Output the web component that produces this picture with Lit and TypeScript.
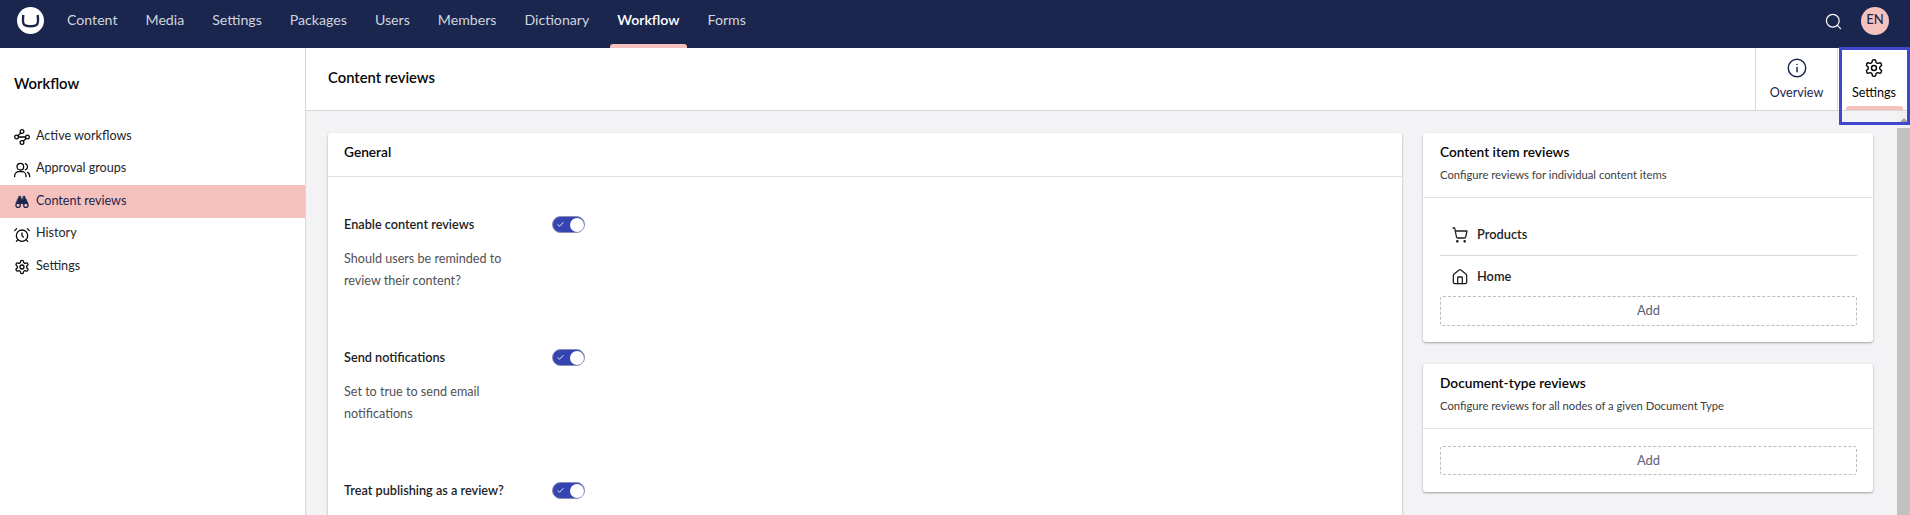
import { LitElement, html, css, svg } from "lit";
import { customElement, property } from "lit/decorators.js";

const ICONS: Record<string, unknown> = {
  workflow: svg`<circle cx="12" cy="3.800" r="2.800"/><path d="m10 5.800-3.500 4"/><circle cx="3.800" cy="12" r="2.800"/><path d="M6.600 12h10.800"/><circle cx="20.200" cy="12" r="2.800"/><path d="m14 18.200 4-4"/><circle cx="12" cy="20.200" r="2.800"/>`,
  users: svg`<path d="M18 22v-1.500a6 6 0 0 0-6-6H7a6 6 0 0 0-6 6V22"/><circle cx="9.500" cy="7" r="5"/><path d="M23.500 22v-1.500a6 6 0 0 0-3-5"/><path d="M17 2.300a5 5 0 0 1 0 9.400"/>`,
  alarm: svg`<circle cx="12" cy="13" r="8.500"/><path d="M12 9v4l2 2"/><path d="M4 2.500 1 5.500"/><path d="m23 5.500-3-3"/><path d="M5.800 19.200 3.500 21.500"/><path d="M18.200 19.200 20.500 21.500"/>`,
  settings: svg`<path d="M12.22 2h-.44a2 2 0 0 0-2 2v.18a2 2 0 0 1-1 1.73l-.43.25a2 2 0 0 1-2 0l-.15-.08a2 2 0 0 0-2.73.73l-.22.38a2 2 0 0 0 .73 2.73l.15.1a2 2 0 0 1 1 1.72v.51a2 2 0 0 1-1 1.74l-.15.09a2 2 0 0 0-.73 2.73l.22.38a2 2 0 0 0 2.73.73l.15-.08a2 2 0 0 1 2 0l.43.25a2 2 0 0 1 1 1.73V20a2 2 0 0 0 2 2h.44a2 2 0 0 0 2-2v-.18a2 2 0 0 1 1-1.73l.43-.25a2 2 0 0 1 2 0l.15.08a2 2 0 0 0 2.73-.73l.22-.39a2 2 0 0 0-.73-2.73l-.15-.08a2 2 0 0 1-1-1.74v-.5a2 2 0 0 1 1-1.74l.15-.09a2 2 0 0 0 .73-2.73l-.22-.38a2 2 0 0 0-2.73-.73l-.15.08a2 2 0 0 1-2 0l-.43-.25a2 2 0 0 1-1-1.73V4a2 2 0 0 0-2-2z"/><circle cx="12" cy="12" r="3"/>`,
  binoculars: svg`<g fill="currentColor" stroke-width="1"><path d="M7.500 3.500h2.500v2.500H7.500zM14 3.500h2.500v2.500H14z"/><path d="M6.500 6.500h4.500v8L3.500 13zM13 6.500h4.500L20.500 13l-7.500 1.500z"/><path d="M10 9h4v5h-4z"/></g><circle cx="6.200" cy="16.800" r="3.300"/><circle cx="17.800" cy="16.800" r="3.300"/>`,
  info: svg`<circle cx="12" cy="12" r="10.500"/><path d="M12 16.500v-5"/><path d="M12 7.700h.01"/>`,
  search: svg`<circle cx="11" cy="11" r="9"/><path d="m22 22-4.600-4.600"/>`,
  cart: svg`<circle cx="8" cy="21.500" r="1"/><circle cx="19" cy="21.500" r="1"/><path d="M1.500 1.500h2.500l2.700 13.500a2 2 0 0 0 2 1.500h9.800a2 2 0 0 0 2-1.500L22.500 6H5"/>`,
  home: svg`<path d="M2 9.500a2 2 0 0 1 .7-1.500l8-6.500a2 2 0 0 1 2.600 0l8 6.500a2 2 0 0 1 .7 1.500V20a2 2 0 0 1-2 2H4a2 2 0 0 1-2-2z"/><path d="M15.500 22v-9a1 1 0 0 0-1-1h-5a1 1 0 0 0-1 1v9"/>`,
  check: svg`<path d="M21 5 9 18l-6-5"/>`,
};

@customElement("ui-icon")
class UiIcon extends LitElement {
  @property() name = "";
  static styles = css`
    :host { display: block; width: 16px; height: 16px; flex: none; }
    svg { display: block; width: 100%; height: 100%; fill: none; stroke: currentColor; overflow: visible;
      stroke-width: var(--stroke, 1.9); stroke-linecap: round; stroke-linejoin: round; }
  `;
  render() {
    return html`<svg viewBox="0 0 24 24">${ICONS[this.name]}</svg>`;
  }
}

@customElement("ui-toggle")
class UiToggle extends LitElement {
  static styles = css`
    :host { display: flex; box-sizing: border-box; width: 33px; height: 17px; padding: 0 0 0 4px;
      border: 1px solid #8b8fb5; border-radius: 9px; background: #3544b1; color: #fff;
      align-items: center; justify-content: space-between; }
    .check { width: 7px; height: 7px; --stroke: 3; }
    .knob { width: 14px; height: 14px; border-radius: 50%; background: #fff; }
  `;
  render() {
    return html`<ui-icon class="check" name="check"></ui-icon><span class="knob"></span>`;
  }
}

@customElement("ui-box")
class UiBox extends LitElement {
  @property() headline = "";
  @property() description = "";
  static styles = css`
    :host { display: block; background: #fff; border-radius: 3px;
      box-shadow: 0 1px 3px rgba(0,0,0,.12), 0 1px 2px rgba(0,0,0,.24); }
    .head { box-sizing: border-box; height: 44px; padding: 10px 16px 0; border-bottom: 1px solid #e3e3e5; }
    .head.tall { height: 65px; padding-left: 17px; }
    .title { font-size: 13.700px; line-height: 18px; font-weight: 600; color: #060606; }
    .desc { font-size: 11.250px; line-height: 14px; margin-top: 7px; color: #3d3d40; }
  `;
  render() {
    return html`<div class="head ${this.description ? "tall" : ""}">
        <div class="title">${this.headline}</div>
        ${this.description ? html`<div class="desc">${this.description}</div>` : null}
      </div><slot></slot>`;
  }
}

@customElement("app-root")
class AppRoot extends LitElement {
  static styles = css`
    :host { display: flex; flex-direction: column; height: 515px; overflow: hidden; position: relative;
      font-family: Lato, "Liberation Sans", sans-serif; font-size: 14px; color: #060606; background: #f3f3f5; }
    .top { height: 48px; flex: none; display: flex; background: #1b264f; color: #d1d4dc; }
    .logo { width: 27px; height: 27px; margin: 7px 0 0 17px; flex: none; }
    .nav { display: flex; margin-left: 9px; flex: 1; font-size: 14.150px; }
    .tab { display: flex; flex-direction: column; justify-content: space-between; padding: 0 7px; }
    .tab span { padding: 11px 7px 0; line-height: 18px; }
    .tab.on { color: #fff; font-weight: 600; }
    .tab.on::after { content: ""; height: 4px; background: #f5c1bc; border-radius: 3px 3px 0 0; }
    .search { width: 17px; height: 17px; margin: 13px 19px 0 0; color: #fff; --stroke: 1.700; }
    .avatar { width: 28px; height: 28px; margin: 7px 21px 0 0; border-radius: 50%; background: #f5c1bc;
      color: #1b264f; font-size: 13px; font-weight: 500; line-height: 25px; text-align: center; }
    .body { flex: 1; display: flex; min-height: 0; }
    .side { box-sizing: border-box; width: 306px; flex: none; background: #fff; border-right: 1px solid #d8d7d9; }
    .side-title { box-sizing: border-box; padding: 26px 14px 0; line-height: 18px; font-size: 14.800px; font-weight: 600; height: 72px; }
    .menu { display: flex; flex-direction: column; }
    .item { display: flex; align-items: center; height: 32.500px; gap: 6px; padding-left: 14px; color: #262629; font-size: 12.600px; }
    .item ui-icon { margin-top: 2px; color: #060606; }
    .item span { line-height: 18px; margin-bottom: 1px; }
    .item.on { background: #f5c1bc; color: #1b264f; }
    .item.on ui-icon { color: #1b264f; }
    .main { flex: 1; display: flex; flex-direction: column; min-width: 0; }
    .head { height: 62px; flex: none; display: flex; background: #fff; border-bottom: 1px solid #d8d7d9; }
    .head-title { flex: 1; padding: 20px 22px; line-height: 18px; font-size: 14.800px; font-weight: 600; }
    .view { box-sizing: border-box; width: 82px; border-left: 1px solid #d8d7d9; display: flex;
      flex-direction: column; align-items: center; padding-top: 10px; font-size: 12.600px; color: #1b264f; --stroke: 1.750; }
    .view ui-icon { width: 20px; height: 20px; }
    .view span { line-height: 16px; margin-top: 7px; }
    .view.on { width: 73px; color: #060606; }
    .view.on::after { content: ""; width: 57px; height: 4px; margin-top: 5px; background: #f5c1bc; border-radius: 3px 3px 0 0; }
    .scroll { flex: 1; display: flex; min-height: 0; }
    .content { flex: 1; display: grid; grid-template-columns: 1074px 450px; gap: 21px; padding: 22px 24px 0 22px; }
    .bar { width: 13px; background: #f1f1f1; display: flex; flex-direction: column; align-items: center; }
    .arrow { border: 4px solid transparent; border-bottom: 4px solid #a3a3a3; border-top: 0; margin: 7px 0 6px; }
    .thumb { width: 13px; flex: 1; background: #c1c1c1; }
    .right { display: flex; flex-direction: column; gap: 22px; }
    .prop { display: grid; grid-template-columns: 180px 1fr; column-gap: 27.500px; height: 133px; padding: 0 16px; }
    .props { padding-top: 38px; }
    .label { font-size: 12.700px; font-weight: 600; line-height: 19px; color: #1d1d1f; }
    .help { font-size: 12.600px; line-height: 21.500px; color: #515054; margin-top: 14px; }
    .prop ui-toggle { margin-top: 1px; }
    .refs { padding: 17px 16px 17px 17px; }
    .refs.filled { padding-top: 16px; padding-bottom: 16px; }
    .ref { box-sizing: border-box; display: flex; align-items: center; gap: 9px; height: 41px; padding-left: 12px; font-size: 12.800px; font-weight: 600; color: #1d1d1f; }
    .ref ui-icon { margin-top: 2px; }
    .ref:first-child { padding-bottom: 2px; }
    .add { box-sizing: border-box; height: 29px; border: 1px dashed #bdbdbf; border-radius: 3px; font-size: 13px;
      line-height: 26px; text-align: center; color: #5c607a; }
    .ref + .ref { border-top: 1px solid #d8d7d9; }
    .ref + .add { height: 30px; }
    .marker { position: absolute; box-sizing: border-box; left: 1839px; top: 47px; width: 71px; height: 78px; border: 3px solid #3f48cc; }
  `;

  private nav = ["Content", "Media", "Settings", "Packages", "Users", "Members", "Dictionary", "Workflow", "Forms"];
  private menu = [["workflow", "Active workflows"], ["users", "Approval groups"], ["binoculars", "Content reviews"], ["alarm", "History"], ["settings", "Settings"]];
  private props = [
    ["Enable content reviews", "Should users be reminded to review their content?"],
    ["Send notifications", "Set to true to send email notifications"],
    ["Treat publishing as a review?", ""],
  ];

  render() {
    return html`
      <header class="top">
        <svg class="logo" viewBox="0 0 27 27"><circle cx="13.500" cy="13.500" r="13.500" fill="#fff"/>
          <path d="M6.300 8C5.200 17.500 6.200 19.200 13.500 19.200S21.800 17.500 20.700 8" fill="none" stroke="#1b264f" stroke-width="2.400"/></svg>
        <nav class="nav">${this.nav.map((n) => html`<div class="tab ${n === "Workflow" ? "on" : ""}"><span>${n}</span></div>`)}</nav>
        <ui-icon class="search" name="search"></ui-icon>
        <div class="avatar">EN</div>
      </header>
      <div class="body">
        <aside class="side">
          <div class="side-title">Workflow</div>
          <div class="menu">${this.menu.map(([i, t]) => html`<div class="item ${t === "Content reviews" ? "on" : ""}"><ui-icon name=${i}></ui-icon><span>${t}</span></div>`)}</div>
        </aside>
        <main class="main">
          <div class="head">
            <div class="head-title">Content reviews</div>
            <div class="view"><ui-icon name="info"></ui-icon><span>Overview</span></div>
            <div class="view on"><ui-icon name="settings"></ui-icon><span>Settings</span></div>
          </div>
          <div class="scroll">
            <div class="content">
              <ui-box headline="General"><div class="props">${this.props.map(([l, h]) => html`<div class="prop">
                <div><div class="label">${l}</div><div class="help">${h}</div></div><ui-toggle></ui-toggle></div>`)}</div></ui-box>
              <div class="right">
                <ui-box headline="Content item reviews" description="Configure reviews for individual content items"><div class="refs filled">
                  <div class="ref"><ui-icon name="cart"></ui-icon>Products</div>
                  <div class="ref"><ui-icon name="home"></ui-icon>Home</div>
                  <div class="add">Add</div></div></ui-box>
                <ui-box headline="Document-type reviews" description="Configure reviews for all nodes of a given Document Type"><div class="refs"><div class="add">Add</div></div></ui-box>
              </div>
            </div>
            <div class="bar"><div class="arrow"></div><div class="thumb"></div></div>
          </div>
        </main>
      </div>
      <div class="marker"></div>`;
  }
}
